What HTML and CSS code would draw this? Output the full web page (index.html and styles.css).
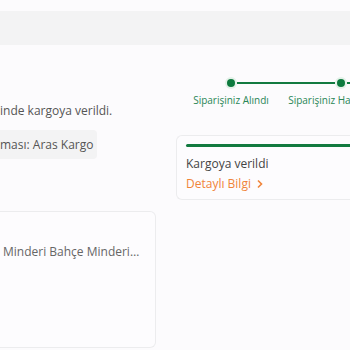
FILE: index.html
```html
<!DOCTYPE html>
<html lang="tr">
<head>
<meta charset="utf-8">
<link rel="stylesheet" href="styles.css">
</head>
<body>
<div class="band"></div>
<div class="main">
  <div class="left">
    <p class="msg">inde kargoya verildi.</p>
    <div class="chip">ması: Aras Kargo</div>
    <div class="product">
      <p class="pname">Minderi Bahçe Minderi…</p>
    </div>
  </div>
  <div class="right">
    <div class="steps">
      <div class="step">
        <div class="track"><span class="line"></span><span class="dot"></span><span class="line on"></span></div>
        <span class="label">Siparişiniz Alındı</span>
      </div>
      <div class="step">
        <div class="track"><span class="line on"></span><span class="dot"></span><span class="line on"></span></div>
        <span class="label">Siparişiniz Hazırlanıyor</span>
      </div>
    </div>
    <div class="status">
      <div class="bar"></div>
      <p class="stitle">Kargoya verildi</p>
      <a class="more">Detaylı Bilgi <svg width="8" height="10" viewBox="0 0 8 10"><path d="M2 1.5 L5.5 5 L2 8.5" fill="none" stroke="currentColor" stroke-width="1.6"/></svg></a>
    </div>
  </div>
</div>
</body>
</html>
```

FILE: styles.css
```css
html, body { margin: 0; padding: 0; overflow: hidden; }
body {
  width: 350px; height: 350px;
  background: #fcfbfd;
  font-family: "Open Sans", "Lato", sans-serif;
  color: #4a4a4a;
}
.band { margin-top: 11px; height: 34px; background: #f3f3f4; }
.main { display: flex; gap: 20px; }
.left { width: 156px; flex: none; }
.msg { margin: 57px 0 0 0; font-size: 12px; line-height: 18px; color: #555; white-space: nowrap; }
.chip {
  margin-top: 10px; width: 97px; height: 29px; box-sizing: border-box;
  background: #f3f3f4; border-radius: 0 4px 4px 0;
  font-size: 12px; line-height: 29px; color: #555; white-space: nowrap;
}
.product {
  margin-top: 52px; height: 137px; box-sizing: border-box;
  border: 1px solid #ececee; border-left: none; border-radius: 0 6px 6px 0;
  background: #fdfcfe;
}
.pname { margin: 31px 0 0 3px; font-size: 12px; line-height: 18px; color: #666; white-space: nowrap; }
.right { width: 240px; flex: none; }
.steps { display: flex; margin-top: 32px; }
.step { width: 110px; flex: none; display: flex; flex-direction: column; align-items: center; }
.track { width: 100%; display: flex; align-items: center; height: 12px; }
.line { flex: 1; height: 2px; }
.line.on { background: #127a40; }
.dot {
  width: 8px; height: 8px; border-radius: 50%; background: #0d7a3e;
  box-shadow: 0 0 0 2px #e3f1e8; margin: 0 2px;
}
.label { margin-top: 4px; font-size: 10px; line-height: 14px; color: #2a8656; white-space: nowrap; }
.status {
  margin-top: 28px; height: 65px; box-sizing: border-box;
  border: 1px solid #ececee; border-right: none; border-radius: 6px 0 0 6px;
  padding: 8px 0 0 9px; background: #fdfcfe;
}
.bar { height: 3px; background: #127a40; border-radius: 2px 0 0 2px; }
.stitle { margin: 8px 0 0 0; font-size: 12px; line-height: 18px; color: #444; }
.more { display: flex; align-items: center; gap: 5px; margin-top: 2px; font-size: 12px; line-height: 18px; color: #f0843a; }
```
